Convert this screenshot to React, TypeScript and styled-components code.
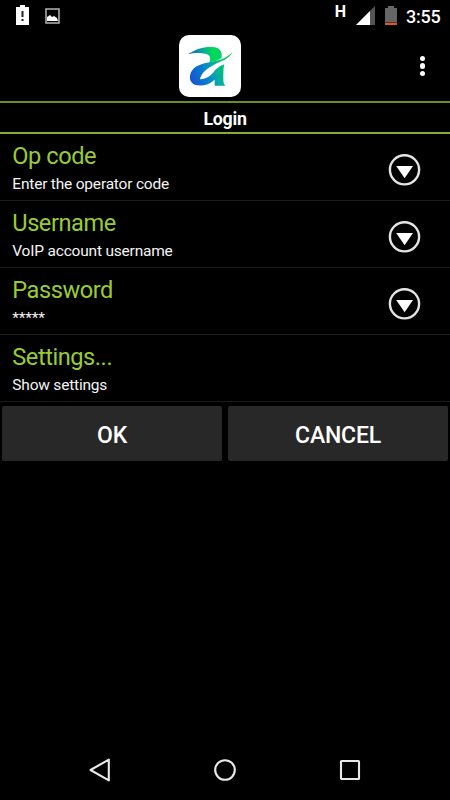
import React from "react";
import styled, { createGlobalStyle } from "styled-components";

const GlobalStyle = createGlobalStyle`
  * { box-sizing: border-box; }
  body { margin: 0; background: #000; font-family: Roboto, "Liberation Sans", sans-serif; color: #fff; }
`;

const Screen = styled.main`
  width: 450px;
  height: 800px;
  display: flex;
  flex-direction: column;
  background: #000;
  overflow: hidden;
`;

const StatusBar = styled.div`
  height: 32px;
  flex: none;
  display: flex;
  justify-content: space-between;
  padding: 0 9px 0 16px;
`;

const StatusGroup = styled.div<{ $gap: number }>`
  display: flex;
  align-items: center;
  gap: ${(p) => p.$gap}px;
`;

const NetworkType = styled.span`
  align-self: flex-start;
  margin-top: 3px;
  font-size: 16px;
  line-height: 18px;
  font-weight: 700;
`;

const Clock = styled.span`
  width: 35px;
  margin-left: -1px;
  font-size: 18px;
  letter-spacing: -0.25px;
  line-height: 33px;
  font-weight: 500;
  white-space: nowrap;
`;

const AppBar = styled.header`
  height: 69px;
  flex: none;
  display: grid;
  grid-template-columns: 179px 62px 1fr;
  padding-top: 3px;
`;

const LogoTile = styled.div`
  grid-column: 2;
  width: 62px;
  height: 62px;
  border-radius: 10px;
  background: #fff;
`;

const MenuButton = styled.button`
  justify-self: end;
  width: 15px;
  height: 62px;
  margin-right: 20px;
  padding: 0;
  border: 0;
  background: none;
  display: flex;
  flex-direction: column;
  align-items: center;
  justify-content: center;
  gap: 2px;
`;

const Dot = styled.span`
  width: 5.5px;
  height: 5.5px;
  border-radius: 50%;
  background: #fff;
`;

const Title = styled.h1`
  margin: 0;
  height: 33px;
  flex: none;
  border-top: 2px solid #6b8e23;
  border-bottom: 2px solid #87ae34;
  font-size: 17.8px;
  letter-spacing: -0.25px;
  font-weight: 700;
  line-height: 32px;
  text-align: center;
`;

const Row = styled.div`
  height: 67px;
  flex: none;
  display: flex;
  align-items: center;
  justify-content: space-between;
  padding: 5px 29px 0 12.3px;
  border-bottom: 1px solid #1b1b1b;
`;

const RowText = styled.div`
  display: flex;
  flex-direction: column;
`;

const RowTitle = styled.span`
  font-size: 23.6px;
  letter-spacing: -0.45px;
  line-height: 29px;
  color: #99cc33;
`;

const RowSummary = styled.span`
  font-size: 15.5px;
  letter-spacing: -0.2px;
  line-height: 26px;
  color: #f4f4f4;
`;

const Actions = styled.div`
  display: flex;
  gap: 6px;
  padding: 4px 2px;
`;

const ActionButton = styled.button`
  flex: 1;
  height: 55px;
  padding: 3px 0 0;
  border: 0;
  border-radius: 2px;
  background: #282828;
  color: #fff;
  font: 500 23px Roboto, "Liberation Sans", sans-serif;
  letter-spacing: -0.2px;
`;

const NavBar = styled.nav`
  margin-top: auto;
  height: 60px;
  flex: none;
  display: flex;
  align-items: center;
  justify-content: space-between;
  padding: 0 87px;
`;

const Icon = styled.svg`
  display: block;
  flex: none;
`;

const Logo = () => (
  <Icon width="62" height="62" viewBox="27 15 186 186">
    <defs>
      <linearGradient id="crest" x1="53" y1="75" x2="155" y2="75" gradientUnits="userSpaceOnUse">
        <stop offset="0" stopColor="#1763b5" />
        <stop offset=".45" stopColor="#08a69e" />
        <stop offset=".75" stopColor="#00db55" />
        <stop offset="1" stopColor="#08cf6a" />
      </linearGradient>
      <linearGradient id="bowl" x1="65" y1="145" x2="170" y2="105" gradientUnits="userSpaceOnUse">
        <stop offset="0" stopColor="#1757d0" />
        <stop offset=".35" stopColor="#087bd0" />
        <stop offset=".65" stopColor="#08aaa8" />
        <stop offset="1" stopColor="#00c957" />
      </linearGradient>
    </defs>
    <path fill="url(#crest)" d="M53 73C78 56 105 49 128 51C148 52 157 63 155 83C148 90 136 93 118 98C124 84 120 74 106 71C90 68 71 68 53 73Z" />
    <path fill="url(#bowl)" d="M187 67C176 89 155 92 132 104C108 117 93 130 90 148C107 149 123 138 135 121C143 112 154 107 163 103C160 113 160 133 160 147C160 156 161 162 166 167H134V149C120 163 101 168 82 166C61 164 55 144 63 127C72 109 94 101 119 97C148 92 168 86 187 67Z" />
  </Icon>
);

const DropIcon = () => (
  <Icon width="33" height="33" viewBox="0 0 33 33">
    <circle cx="16.5" cy="16.8" r="14.6" fill="none" stroke="#e4e4e4" strokeWidth="2.4" />
    <path d="M8.2 13H25L16.6 25.3Z" fill="#fff" />
  </Icon>
);

const rows = [
  { title: "Op code", summary: "Enter the operator code", menu: true },
  { title: "Username", summary: "VoIP account username", menu: true },
  { title: "Password", summary: "*****", menu: true },
  { title: "Settings...", summary: "Show settings", menu: false },
];

export default function App() {
  return (
    <Screen>
      <GlobalStyle />
      <StatusBar>
        <StatusGroup $gap={16}>
          <Icon width="13" height="22" viewBox="0 0 13 22">
            <path d="M4 0H9V2H13V20H0V2H4Z" fill="#fff" />
            <path d="M5.5 6H7.5V12H5.5ZM5.5 14H7.5V16H5.5Z" fill="#222" />
          </Icon>
          <Icon width="15" height="16" viewBox="0 0 15 16">
            <rect x="1" y="1" width="13" height="14" fill="none" stroke="#aaa" strokeWidth="1.6" />
            <path d="M2 9L5 7L7 9L9 8L12 10L13 13H2Z" fill="#fff" />
          </Icon>
        </StatusGroup>
        <StatusGroup $gap={10}>
          <NetworkType>H</NetworkType>
          <Icon width="19" height="20" viewBox="0 0 19 20">
            <path d="M19 0V19H0Z" fill="#555" />
            <path d="M14 5V19H0Z" fill="#fff" />
          </Icon>
          <Icon width="12" height="20" viewBox="0 0 12 20">
            <path d="M3 0H9V2H12V16H0V2H3Z" fill="#666" />
            <path d="M0 16.5H12V19H0Z" fill="#d65a2e" />
          </Icon>
          <Clock>3:55</Clock>
        </StatusGroup>
      </StatusBar>
      <AppBar>
        <LogoTile><Logo /></LogoTile>
        <MenuButton aria-label="More options"><Dot /><Dot /><Dot /></MenuButton>
      </AppBar>
      <Title>Login</Title>
      {rows.map((row) => (
        <Row key={row.title}>
          <RowText>
            <RowTitle>{row.title}</RowTitle>
            <RowSummary>{row.summary}</RowSummary>
          </RowText>
          {row.menu && <DropIcon />}
        </Row>
      ))}
      <Actions>
        <ActionButton>OK</ActionButton>
        <ActionButton>CANCEL</ActionButton>
      </Actions>
      <NavBar>
        <Icon width="24" height="24" viewBox="0 0 24 24">
          <path d="M3.5 12L21.8 1.6V22.4Z" fill="none" stroke="#e8e8e8" strokeWidth="2.1" strokeLinejoin="round" />
        </Icon>
        <Icon width="24" height="24" viewBox="0 0 24 24">
          <circle cx="12" cy="12" r="9.8" fill="none" stroke="#e8e8e8" strokeWidth="2.1" />
        </Icon>
        <Icon width="24" height="24" viewBox="0 0 24 24">
          <rect x="2" y="3" width="18" height="18" rx=".5" fill="none" stroke="#e8e8e8" strokeWidth="2.1" />
        </Icon>
      </NavBar>
    </Screen>
  );
}
